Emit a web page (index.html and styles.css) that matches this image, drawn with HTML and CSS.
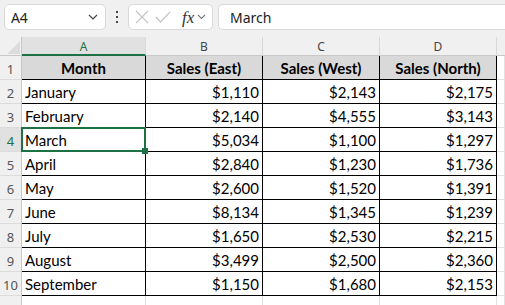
FILE: index.html
```html
<!DOCTYPE html>
<html>
<head>
<meta charset="utf-8">
<link rel="stylesheet" href="styles.css">
</head>
<body>
<div class="app">
  <div class="toolbar">
    <div class="namebox">
      <span class="nb-text">A4</span>
      <svg class="chev" width="10" height="6" viewBox="0 0 10 6"><path d="M1 1l4 4 4-4" fill="none" stroke="#444" stroke-width="1.2"/></svg>
    </div>
    <div class="dots"><i></i><i></i><i></i></div>
    <div class="fxbox">
      <svg width="14" height="14" viewBox="0 0 14 14"><path d="M1 1l12 12M13 1L1 13" stroke="#c4c4c4" stroke-width="1.2" fill="none"/></svg>
      <svg width="16" height="12" viewBox="0 0 16 12"><path d="M1 6l4.5 5L15 1" stroke="#c4c4c4" stroke-width="1.2" fill="none"/></svg>
      <span class="fx">fx</span>
      <svg class="chev2" width="9" height="6" viewBox="0 0 9 6"><path d="M1 1l3.5 3.5L8 1" fill="none" stroke="#777" stroke-width="1.1"/></svg>
    </div>
    <div class="formula">March</div>
  </div>
  <div class="sheet">
    <div class="corner"><svg width="18" height="16" viewBox="0 0 18 16"><path d="M17 2V15H4z" fill="#dcdcdc"/></svg></div>
    <div class="ch sel">A</div>
    <div class="ch">B</div>
    <div class="ch">C</div>
    <div class="ch">D</div>
    <div class="ch last"></div>

    <div class="rh">1</div>
    <div class="c hd">Month</div>
    <div class="c hd">Sales (East)</div>
    <div class="c hd">Sales (West)</div>
    <div class="c hd">Sales (North)</div>
    <div class="g"></div>

    <div class="rh">2</div>
    <div class="c">January</div>
    <div class="c n">$1,110</div>
    <div class="c n">$2,143</div>
    <div class="c n">$2,175</div>
    <div class="g"></div>

    <div class="rh">3</div>
    <div class="c">February</div>
    <div class="c n">$2,140</div>
    <div class="c n">$4,555</div>
    <div class="c n">$3,143</div>
    <div class="g"></div>

    <div class="rh rsel">4</div>
    <div class="c active">March</div>
    <div class="c n">$5,034</div>
    <div class="c n">$1,100</div>
    <div class="c n">$1,297</div>
    <div class="g"></div>

    <div class="rh">5</div>
    <div class="c">April</div>
    <div class="c n">$2,840</div>
    <div class="c n">$1,230</div>
    <div class="c n">$1,736</div>
    <div class="g"></div>

    <div class="rh">6</div>
    <div class="c">May</div>
    <div class="c n">$2,600</div>
    <div class="c n">$1,520</div>
    <div class="c n">$1,391</div>
    <div class="g"></div>

    <div class="rh">7</div>
    <div class="c">June</div>
    <div class="c n">$8,134</div>
    <div class="c n">$1,345</div>
    <div class="c n">$1,239</div>
    <div class="g"></div>

    <div class="rh">8</div>
    <div class="c">July</div>
    <div class="c n">$1,650</div>
    <div class="c n">$2,530</div>
    <div class="c n">$2,215</div>
    <div class="g"></div>

    <div class="rh">9</div>
    <div class="c">August</div>
    <div class="c n">$3,499</div>
    <div class="c n">$2,500</div>
    <div class="c n">$2,360</div>
    <div class="g"></div>

    <div class="rh">10</div>
    <div class="c">September</div>
    <div class="c n">$1,150</div>
    <div class="c n">$1,680</div>
    <div class="c n">$2,153</div>
    <div class="g"></div>

    <div class="rh">11</div>
    <div class="g"></div>
    <div class="g"></div>
    <div class="g"></div>
    <div class="g"></div>
    <div class="g"></div>
  </div>
</div>
</body>
</html>
```
FILE: styles.css
```css
* { box-sizing: border-box; }
html, body { margin: 0; padding: 0; }
body { width: 505px; height: 305px; overflow: hidden; background: #fff; }
.app { width: 505px; height: 305px; display: flex; flex-direction: column; }

.toolbar {
  height: 37px;
  background: #f0f0f0;
  display: flex;
  align-items: flex-start;
  padding: 4px 0 0 4px;
  font-family: "Noto Sans", "Open Sans", sans-serif;
  font-size: 14px;
  color: #222;
  flex: none;
}
.namebox {
  width: 102px;
  height: 26px;
  background: #fff;
  border: 1px solid #dadada;
  border-radius: 5px;
  display: flex;
  align-items: center;
  justify-content: space-between;
  padding: 0 7px 0 6px;
}
.nb-text { letter-spacing: -0.3px; }
.dots {
  width: 22px;
  height: 26px;
  display: flex;
  flex-direction: column;
  align-items: center;
  justify-content: center;
  gap: 3px;
}
.dots i { display: block; width: 2px; height: 2px; background: #444; }
.fxbox {
  width: 85px;
  height: 26px;
  background: #fff;
  border: 1px solid #dadada;
  border-radius: 5px;
  display: flex;
  align-items: center;
  padding: 0 4px 0 6px;
  gap: 6px;
}
.fx {
  font-family: "Liberation Serif", "DejaVu Serif", serif;
  font-style: italic;
  font-size: 17px;
  color: #333;
  margin-left: 5px;
  line-height: 1;
}
.chev2 { margin-left: -3px; }
.formula {
  flex: 1;
  height: 26px;
  margin-left: 5px;
  background: #fff;
  border: 1px solid #dadada;
  border-right: none;
  border-radius: 5px 0 0 5px;
  padding: 0 0 0 11px;
  display: flex;
  align-items: center;
}

.sheet {
  display: grid;
  grid-template-columns: 22px 124px 117px 117px 117px 1fr;
  grid-template-rows: 19px repeat(11, 24px);
  flex: none;
}
.corner {
  background: #f0f0f0;
  border-right: 1px solid #c8c8c8;
  border-bottom: 1px solid #c8c8c8;
  display: flex;
  align-items: flex-end;
  justify-content: flex-end;
}
.ch {
  background: #f0f0f0;
  border-right: 1px solid #d8d8d8;
  border-bottom: 1px solid #c8c8c8;
  font-family: "Noto Sans", "Open Sans", sans-serif;
  font-size: 12px;
  color: #444;
  display: flex;
  align-items: center;
  justify-content: center;
  padding-top: 1px;
}
.ch.sel {
  background: #e1e1e1;
  color: #1e7145;
  border-bottom: 2px solid #1e7145;
}
.ch.last { border-right: none; }
.rh {
  background: #f0f0f0;
  border-right: 1px solid #c8c8c8;
  border-bottom: 1px solid #dcdcdc;
  font-family: "Noto Sans", "Open Sans", sans-serif;
  font-size: 13px;
  color: #555;
  display: flex;
  align-items: flex-end;
  justify-content: center;
  padding-bottom: 1px;
}
.rh.rsel { background: #e1e1e1; color: #1e7145; }
.c {
  border-right: 1px solid #000;
  border-bottom: 1px solid #000;
  font-family: "Lato", "Liberation Sans", sans-serif;
  font-size: 15px;
  color: #000;
  display: flex;
  align-items: flex-end;
  padding: 0 3px 2px 3px;
  white-space: nowrap;
}
.c.hd {
  background: #d9d9d9;
  font-weight: 700;
  justify-content: center;
}
.c.n { justify-content: flex-end; }
.c.active { position: relative; }
.c.active::after {
  content: "";
  position: absolute;
  left: -1px; top: -1px; right: -1px; bottom: -1px;
  border: 2px solid #1e7145;
}
.c.active::before {
  content: "";
  position: absolute;
  right: -3px; bottom: -3px;
  width: 6px; height: 6px;
  background: #1e7145;
  z-index: 2;
}
.g {
  border-right: 1px solid #e1e1e1;
  border-bottom: 1px solid #e1e1e1;
}
```
